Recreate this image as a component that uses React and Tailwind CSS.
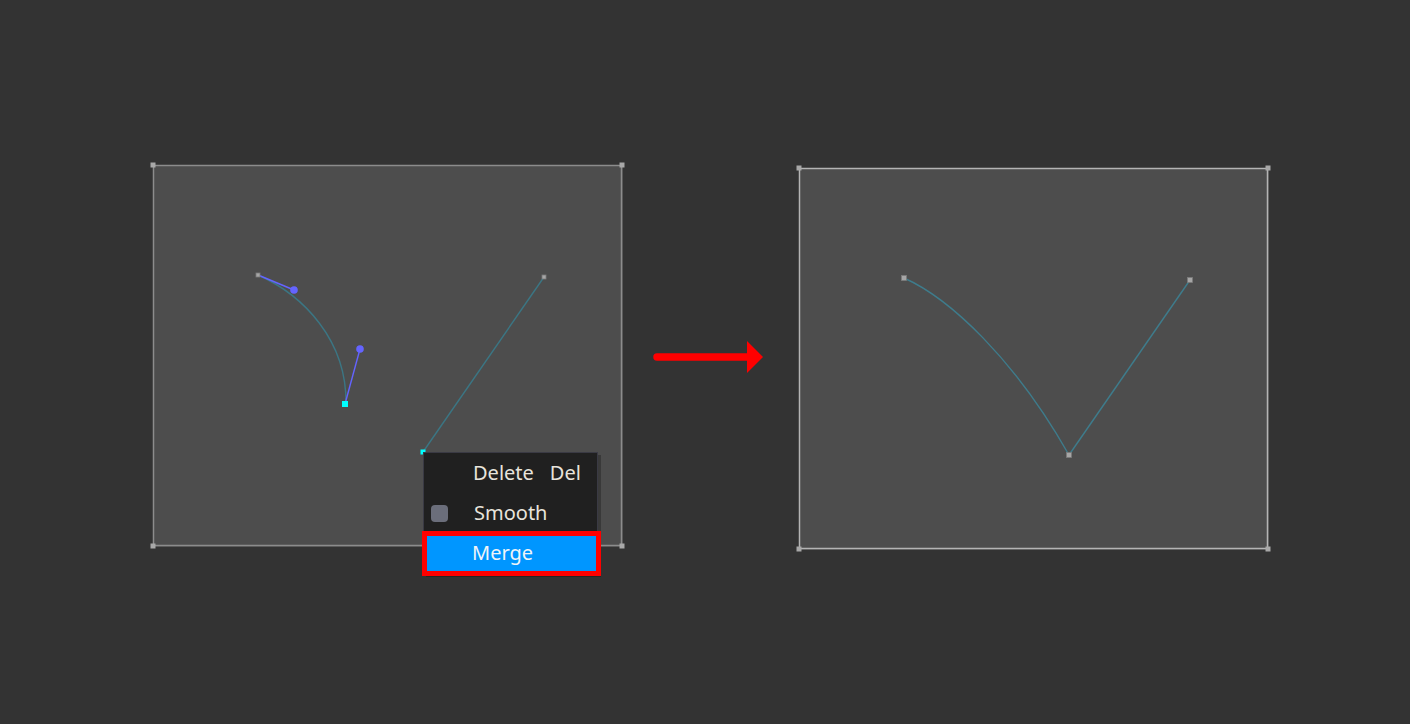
import React from 'react'

const FONT = { fontFamily: '"Noto Sans", "Open Sans", sans-serif' }

function Frame({ w, h, color }) {
  const corners = [[0, 0], [w, 0], [0, h], [w, h]]
  return (
    <>
      <rect x="0.5" y="0.5" width={w - 1} height={h - 1} fill="none" stroke={color} strokeWidth="1.5" />
      {corners.map(([x, y], i) => (
        <rect key={i} x={x - 2.5} y={y - 2.5} width="5" height="5" fill="#a8a8a8" />
      ))}
    </>
  )
}

function Point({ x, y, color = '#a6a6a6', size = 5 }) {
  return <rect x={x - size / 2} y={y - size / 2} width={size} height={size} fill={color} stroke={color === '#a6a6a6' ? '#7a7a7a' : 'none'} strokeWidth="0.8" />
}

function ContextMenu() {
  return (
    <div
      className="absolute left-[270px] top-[287px] w-[175px] bg-[#202020] border border-[#3a3a44] shadow-[3px_3px_0_rgba(0,0,0,0.25)] text-[20px] text-[#e8e4dc]"
      style={FONT}
    >
      <div className="h-[40px] flex items-center pl-[49px]">
        <span>Delete</span>
        <span className="ml-[16px]">Del</span>
      </div>
      <div className="h-[40px] flex items-center pl-[7px]">
        <span className="w-[17px] h-[17px] rounded-[4px] bg-[#6b6e7b]" />
        <span className="ml-[26px]">Smooth</span>
      </div>
      <div className="relative h-[40px] flex items-center pl-[48px] bg-[#0096ff] text-[#f0f4f8]">
        <span>Merge</span>
        <div className="absolute -left-[2px] -right-[4px] -top-[2px] -bottom-[3px] border-[5px] border-[#ff0000]" />
      </div>
    </div>
  )
}

export default function App() {
  return (
    <div className="w-full h-screen bg-[#333333] flex items-start pl-[153px] pt-[165px] overflow-hidden">
      <div className="relative w-[470px] h-[382px] bg-[#4d4d4d] shrink-0">
        <svg className="absolute inset-0 overflow-visible" width="470" height="382">
          <Frame w={469} h={381} color="#8c8c8c" />
          <path d="M105,110 C150,130 194,175 193,239" fill="none" stroke="#3b7684" strokeWidth="1.4" />
          <line x1="105" y1="110" x2="141" y2="125" stroke="#6464ff" strokeWidth="1.4" />
          <line x1="192" y1="239" x2="207" y2="184" stroke="#6464ff" strokeWidth="1.4" />
          <circle cx="141" cy="125" r="3.8" fill="#6464ff" />
          <circle cx="207" cy="184" r="3.8" fill="#6464ff" />
          <Point x={105} y={110} size={4} />
          <rect x="189" y="236" width="6" height="6" fill="#00ffff" />
          <line x1="391" y1="112" x2="270" y2="287" stroke="#3b7684" strokeWidth="1.4" />
          <Point x={391} y={112} size={4} />
          <rect x="267.5" y="284.5" width="5" height="5" fill="#00ffff" />
        </svg>
        <ContextMenu />
      </div>

      <svg className="ml-[30px] mt-[175px] shrink-0" width="110" height="34" viewBox="0 0 110 34">
        <line x1="4" y1="17" x2="96" y2="17" stroke="#ff0000" strokeWidth="7.5" strokeLinecap="round" />
        <polygon points="94,1 110,17 94,33" fill="#ff0000" />
      </svg>

      <div className="relative ml-[36px] mt-[3px] w-[470px] h-[382px] bg-[#4d4d4d] shrink-0">
        <svg className="absolute inset-0 overflow-visible" width="470" height="382">
          <Frame w={469} h={381} color="#b4b4b4" />
          <path d="M105,110 C150,130 215,190 270,287" fill="none" stroke="#3e7c8c" strokeWidth="1.4" />
          <line x1="391" y1="112" x2="270" y2="287" stroke="#3e7c8c" strokeWidth="1.4" />
          <Point x={105} y={110} />
          <Point x={391} y={112} />
          <Point x={270} y={287} />
        </svg>
      </div>
    </div>
  )
}
